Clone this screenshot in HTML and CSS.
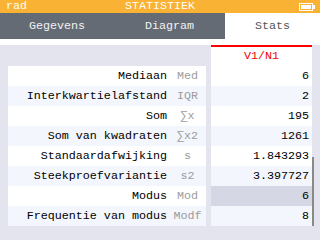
FILE: index.html
```html
<!DOCTYPE html>
<html lang="nl">
<head>
  <meta charset="UTF-8">
  <title>Statistiek</title>
  <link rel="stylesheet" href="styles.css">
</head>
<body>
  <header class="titlebar">
    <span class="mode">rad</span>
    <span class="title">STATISTIEK</span>
    <svg class="battery" width="16" height="8" viewBox="0 0 16 8">
      <rect x="0.5" y="0.5" width="13" height="7" fill="none" stroke="#fff"/>
      <rect x="2" y="2" width="10" height="4" fill="#fff"/>
      <rect x="14" y="2" width="2" height="4" fill="#fff"/>
    </svg>
  </header>
  <nav class="tabs">
    <div class="tab">Gegevens</div>
    <div class="tab">Diagram</div>
    <div class="tab active">Stats</div>
  </nav>
  <div class="strip"></div>
  <main class="content">
    <div class="labels">
      <div class="row"><span class="name">Mediaan</span><span class="abbr">Med</span></div>
      <div class="row"><span class="name">Interkwartielafstand</span><span class="abbr">IQR</span></div>
      <div class="row"><span class="name">Som</span><span class="abbr">∑x</span></div>
      <div class="row"><span class="name">Som van kwadraten</span><span class="abbr">∑x2</span></div>
      <div class="row"><span class="name">Standaardafwijking</span><span class="abbr">s</span></div>
      <div class="row"><span class="name">Steekproefvariantie</span><span class="abbr">s2</span></div>
      <div class="row"><span class="name">Modus</span><span class="abbr">Mod</span></div>
      <div class="row"><span class="name">Frequentie van modus</span><span class="abbr">Modf</span></div>
    </div>
    <div class="values">
      <div class="head">V1/N1</div>
      <div class="row">6</div>
      <div class="row">2</div>
      <div class="row">195</div>
      <div class="row">1261</div>
      <div class="row">1.843293</div>
      <div class="row">3.397727</div>
      <div class="row selected">6</div>
      <div class="row">8</div>
    </div>
    <div class="scrollbar"></div>
  </main>
</body>
</html>
```

FILE: styles.css
```css
* { box-sizing: border-box; }
body {
  margin: 0;
  width: 320px;
  height: 240px;
  overflow: hidden;
  font-family: "Liberation Mono", "DejaVu Sans Mono", monospace;
  font-size: 11.7px;
  background: #e4e4ee;
  color: #000;
}

/* Title bar */
.titlebar {
  height: 13px;
  background: #f9b233;
  color: #fff;
  display: flex;
  align-items: center;
  justify-content: space-between;
  padding: 0 5px 0 6px;
  position: relative;
  line-height: 13px;
}
.title {
  position: absolute;
  left: 0;
  right: 0;
  text-align: center;
}
.battery { display: block; }

/* Tabs */
.tabs {
  height: 26px;
  background: #646b75;
  display: grid;
  grid-template-columns: 114px 111px 95px;
}
.tab {
  display: flex;
  align-items: center;
  justify-content: center;
  color: #f2f2f2;
}
.tab.active {
  background: #fff;
  color: #555;
}
.strip {
  height: 6px;
  background: #fff;
}

/* Stats table */
.content {
  display: flex;
  align-items: flex-start;
  padding-left: 8px;
}
.labels {
  width: 198px;
  margin-top: 21px;
}
.labels .row {
  display: flex;
}
.row {
  height: 20px;
  line-height: 20px;
  background: #fff;
}
.row:nth-child(even) { background: #f3f6fc; }
.values .row:nth-child(odd) { background: #f3f6fc; }
.values .row:nth-child(even) { background: #fff; }
.name {
  width: 161px;
  text-align: right;
  padding-right: 2px;
}
.abbr {
  width: 37px;
  text-align: center;
  color: #9c9c9c;
}
.values {
  width: 101px;
  margin-left: 5px;
}
.values .row {
  text-align: right;
  padding-right: 3px;
}
.values .row.selected { background: #d5d7e4; }
.head {
  height: 21px;
  background: #fff;
  border-top: 2px solid #f00;
  color: #e00;
  text-align: center;
  line-height: 18px;
}
.scrollbar {
  width: 2px;
  height: 69px;
  margin-top: 112px;
  background: #8a8a8a;
}
```
